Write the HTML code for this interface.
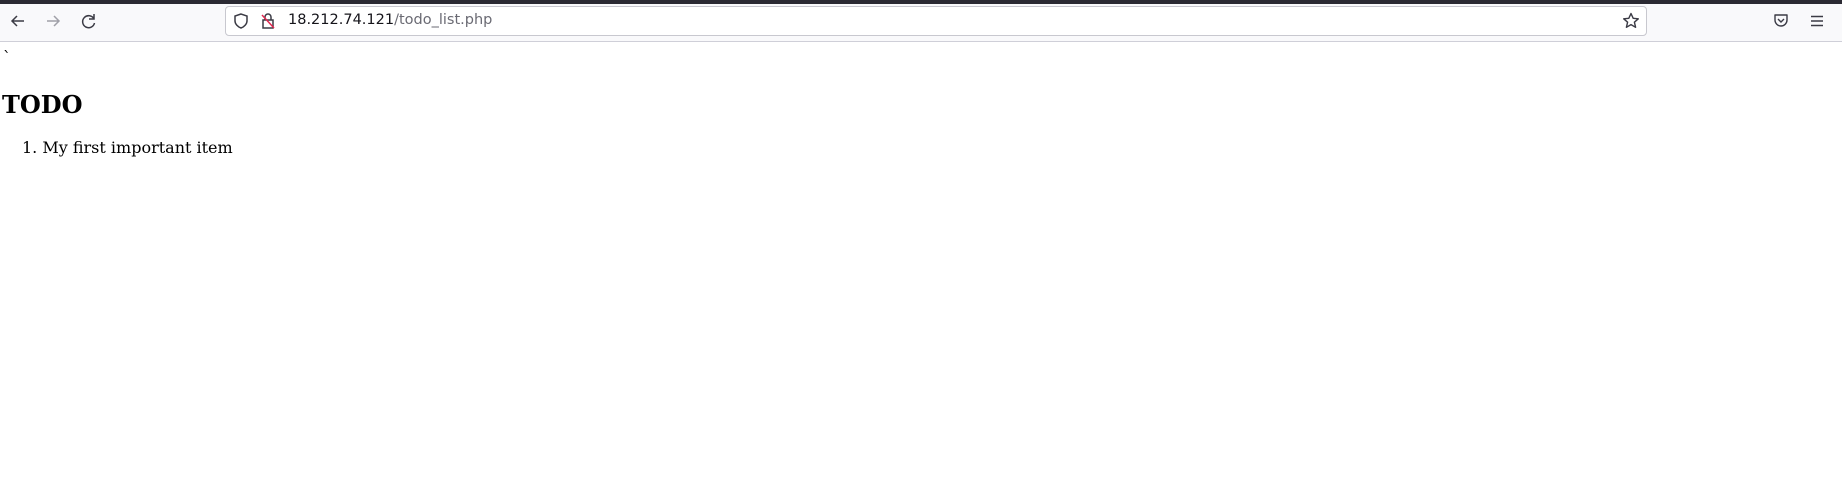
<!DOCTYPE html>
<html><head><style>
html,body{margin:0;padding:0;width:1842px;height:477px;overflow:hidden;background:#fff;position:relative}
.top{position:absolute;left:0;top:0;width:1842px;height:4px;background:#2b2a33}
.bar{position:absolute;left:0;top:4px;width:1842px;height:37px;background:#f9f9fb;border-bottom:1px solid #cfcfd8}
.url{position:absolute;left:225px;top:6px;width:1422px;height:30px;background:#fff;border:1px solid #c8c8cf;border-radius:4px;box-sizing:border-box}
.t{position:absolute;font-family:"DejaVu Serif",serif;color:#000;white-space:nowrap}
svg{position:absolute}
</style></head><body>
<div class="top"></div>
<div class="bar"></div>
<div class="url"></div>
<svg style="left:8px;top:11px" width="20" height="20" viewBox="0 0 20 20"><path d="M16 10H4M9 5L4 10L9 15" stroke="#3b3b45" stroke-width="1.5" fill="none"/></svg>
<svg style="left:43px;top:11px" width="20" height="20" viewBox="0 0 20 20"><path d="M4 10H16M11 5L16 10L11 15" stroke="#a0a0a8" stroke-width="1.5" fill="none"/></svg>
<svg style="left:79px;top:11px" width="20" height="20" viewBox="0 0 20 20"><path d="M15 8A6 6 0 1 0 15.5 12M15 3V8H10" stroke="#3b3b45" stroke-width="1.5" fill="none"/></svg>
<svg style="left:232px;top:12px" width="18" height="18" viewBox="0 0 18 18"><path d="M9 2L3 4V9C3 12 6 15 9 16C12 15 15 12 15 9V4Z" stroke="#3b3b45" stroke-width="1.5" fill="none"/></svg>
<svg style="left:259px;top:12px" width="18" height="18" viewBox="0 0 18 18"><path d="M6 8V5A3 3 0 0 1 12 5V8M4 8H14V16H4Z" stroke="#3b3b45" stroke-width="1.5" fill="none"/><path d="M3 3L15 16" stroke="#e22850" stroke-width="1.5"/></svg>
<div style="position:absolute;left:288px;top:12px;font-family:'DejaVu Sans','Liberation Sans',sans-serif;font-size:14.5px;color:#15141a">18.212.74.121<span style="color:#6a6a73">/todo_list.php</span></div>
<svg style="left:1621px;top:11px" width="20" height="20" viewBox="0 0 20 20"><path d="M10 2.5L12.2 7.3L17.3 7.8L13.4 11.2L14.6 16.3L10 13.6L5.4 16.3L6.6 11.2L2.7 7.8L7.8 7.3Z" stroke="#3b3b45" stroke-width="1.4" fill="none" stroke-linejoin="round"/></svg>
<svg style="left:1772px;top:12px" width="18" height="18" viewBox="0 0 18 18"><path d="M3 3H15V8A6 6 0 0 1 3 8Z" stroke="#3b3b45" stroke-width="1.4" fill="none" stroke-linejoin="round"/><path d="M6 7L9 10L12 7" stroke="#3b3b45" stroke-width="1.4" fill="none"/></svg>
<svg style="left:1808px;top:12px" width="18" height="18" viewBox="0 0 18 18"><path d="M3 4.5H15M3 9H15M3 13.5H15" stroke="#3b3b45" stroke-width="1.4"/></svg>
<div class="t" style="left:3px;top:50px;font-size:16px;line-height:16px">`</div>
<div class="t" style="left:2px;top:93px;font-size:24px;line-height:24px;font-weight:bold">TODO</div>
<div class="t" style="left:22px;top:140px;font-size:16px;line-height:16px">1. My first important item</div>
</body></html>
